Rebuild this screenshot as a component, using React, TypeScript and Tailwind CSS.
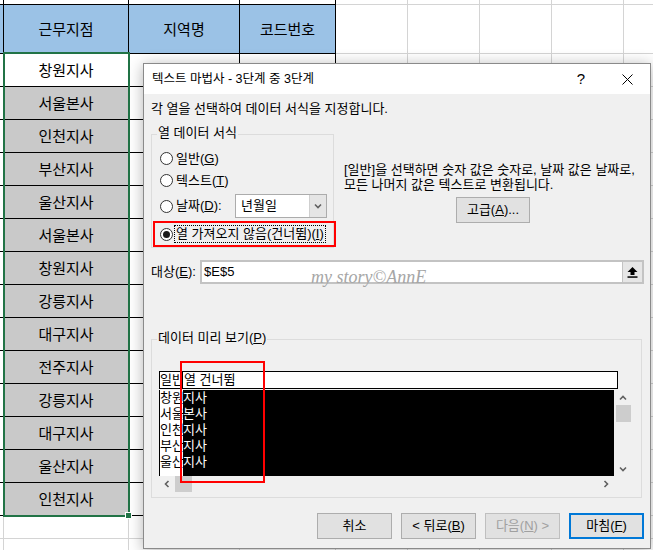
import React from 'react';

const FONT = "font-['Noto_Sans_CJK_KR','Noto_Sans',sans-serif]";
const DIALOG_FONT = "font-['Liberation_Sans','Noto_Sans_CJK_KR',sans-serif]";

const widths = ['w-[4px]', 'w-[125px]', 'w-[111px]', 'w-[96px]', 'w-[72px]', 'w-[72px]', 'w-[72px]', 'w-[72px]', 'w-[72px]'];

const branches = [
  '창원지사', '서울본사', '인천지사', '부산지사', '울산지사', '서울본사', '창원지사',
  '강릉지사', '대구지사', '전주지사', '강릉지사', '대구지사', '울산지사', '인천지사',
];

const headers = ['', '근무지점', '지역명', '코드번호'];

function Chevron({ dir }: { dir: 'up' | 'down' | 'left' | 'right' }) {
  const d = {
    up: 'M1 5.5 L4 2.5 L7 5.5',
    down: 'M1 2.5 L4 5.5 L7 2.5',
    left: 'M5.5 1 L2.5 4 L5.5 7',
    right: 'M2.5 1 L5.5 4 L2.5 7',
  }[dir];
  return (
    <svg width="8" height="8" viewBox="0 0 8 8">
      <path d={d} fill="none" stroke="#606060" strokeWidth="1.6" />
    </svg>
  );
}

function Radio({ checked = false }: { checked?: boolean }) {
  return (
    <span className="w-[13px] h-[13px] rounded-full border border-[#333] bg-white flex items-center justify-center shrink-0">
      {checked && <span className="w-[7px] h-[7px] rounded-full bg-[#1a1a1a]" />}
    </span>
  );
}

function Sheet() {
  return (
    <div className={`flex flex-col ${FONT} text-[15px] text-black`}>
      {/* partial row above the table */}
      <div className="flex h-[5px]">
        {widths.map((w, i) => (
          <div
            key={i}
            className={`${w} shrink-0 box-border border-r border-b ${i < 4 ? 'border-black' : 'border-[#d4d4d4]'}`}
          />
        ))}
      </div>
      {/* header */}
      <div className="flex h-[49px]">
        {widths.map((w, i) => (
          <div
            key={i}
            className={`${w} shrink-0 box-border border-r border-b flex items-center justify-center ${
              i < 4 ? 'border-black bg-[#9bc2e6]' : 'border-[#d4d4d4] bg-white'
            }`}
          >
            {headers[i]}
          </div>
        ))}
      </div>
      {branches.map((b, r) => (
        <div key={r} className="flex h-[33px]">
          {widths.map((w, i) => (
            <div
              key={i}
              className={`${w} shrink-0 box-border border-r border-b flex items-center justify-center ${
                i < 4 ? 'border-black' : 'border-[#d4d4d4]'
              } ${i === 1 && r > 0 ? 'bg-[#c9c9c9]' : 'bg-white'}`}
            >
              {i === 1 ? b : ''}
            </div>
          ))}
        </div>
      ))}
      {[0, 1].map((r) => (
        <div key={r} className="flex h-[23px]">
          {widths.map((w, i) => (
            <div key={i} className={`${w} shrink-0 box-border border-r border-b border-[#d4d4d4]`} />
          ))}
        </div>
      ))}
    </div>
  );
}

function Button({ children, primary = false, disabled = false }: { children: React.ReactNode; primary?: boolean; disabled?: boolean }) {
  return (
    <div
      className={`w-[75px] h-[26px] box-border flex items-center justify-center bg-[#e1e1e1] ${
        primary ? 'border-2 border-[#0078d7]' : disabled ? 'border border-[#bfbfbf]' : 'border border-[#adadad]'
      } ${disabled ? 'text-[#a0a0a0]' : 'text-black'}`}
    >
      {children}
    </div>
  );
}

function Dialog() {
  return (
    <div
      className={`absolute left-[143px] top-[63px] w-[508px] h-[486px] box-border border border-[#8a8a8a] bg-[#f0f0f0] shadow-[0_2px_14px_rgba(0,0,0,0.3)] flex flex-col ${DIALOG_FONT} text-[13px] leading-[16px] text-black`}
    >
      {/* title bar */}
      <div className="h-[30px] bg-white flex items-center shrink-0">
        <div className="pl-[8px] flex-1 text-[12.5px] leading-[16px] whitespace-nowrap">텍스트 마법사 - 3단계 중 3단계</div>
        <div className="w-[46px] h-full flex items-center justify-center text-[15px]">?</div>
        <div className="w-[46px] h-full flex items-center justify-center">
          <svg width="11" height="11" viewBox="0 0 11 11">
            <path d="M0.5 0.5 L10.5 10.5 M10.5 0.5 L0.5 10.5" stroke="#000" strokeWidth="1" />
          </svg>
        </div>
      </div>

      {/* body */}
      <div className="flex-1 pl-[7px] pr-[6px] flex flex-col relative">
        <div className="mt-[7px] h-[16px] whitespace-nowrap">각 열을 선택하여 데이터 서식을 지정합니다.</div>

        <div className="mt-[17px] flex">
          {/* 열 데이터 서식 group */}
          <div className="relative w-[183px] h-[114px] box-border border border-[#dcdcdc] shrink-0 flex flex-col">
            <div className="absolute left-[5px] -top-[10px] bg-[#f0f0f0] px-[1px] whitespace-nowrap">열 데이터 서식</div>
            <div className="mt-[15px] h-[18px] pl-[8px] flex items-center gap-[3px]">
              <Radio />
              <span>일반(<u>G</u>)</span>
            </div>
            <div className="mt-[5px] h-[18px] pl-[8px] flex items-center gap-[3px]">
              <Radio />
              <span>텍스트(<u>T</u>)</span>
            </div>
            <div className="mt-[5px] h-[24px] pl-[8px] flex items-center gap-[3px]">
              <Radio />
              <span className="w-[56px] shrink-0 whitespace-nowrap">날짜(<u>D</u>):</span>
              <div className="w-[92px] h-[24px] box-border border border-[#acacac] bg-white flex shrink-0">
                <div className="flex-1 pl-[5px] flex items-center">년월일</div>
                <div className="w-[17px] bg-[#e5e5e5] border-l border-[#cfcfcf] flex items-center justify-center">
                  <Chevron dir="down" />
                </div>
              </div>
            </div>
            <div className="mt-[3px] ml-[1px] w-[183px] h-[26px] box-border border-2 border-[#ff0000] shrink-0 pl-[5px] flex items-center gap-[1px] relative z-10">
              <Radio checked />
              <span className="border border-dotted border-black px-[1px] whitespace-nowrap">
                열 가져오지 않음(건너뜀)(<u>I</u>)
              </span>
            </div>
          </div>

          {/* description */}
          <div className="ml-[10px] pt-[28px] flex flex-col">
            <div className="leading-[15px] whitespace-nowrap">
              [일반]을 선택하면 숫자 값은 숫자로, 날짜 값은 날짜로,
              <br />
              모든 나머지 값은 텍스트로 변환됩니다.
            </div>
            <div className="mt-[5px] ml-[112px] w-[74px] h-[26px] box-border border border-[#adadad] bg-[#e1e1e1] flex items-center justify-center">
              고급(<u>A</u>)...
            </div>
          </div>
        </div>

        {/* 대상 */}
        <div className="mt-[12px] h-[24px] flex items-center">
          <div className="w-[49px] shrink-0 whitespace-nowrap">대상(<u>E</u>):</div>
          <div className="flex-1 h-full box-border border-2 border-[#c3c3c3] bg-white flex">
            <div className="flex-1 pl-[2px] flex items-center">$E$5</div>
            <div className="w-[20px] bg-[#e6e6e6] border-l border-[#c3c3c3] flex items-center justify-center">
              <svg width="11" height="12" viewBox="0 0 11 12">
                <path d="M5.5 1 L10.5 6 L7.5 6 L7.5 9 L3.5 9 L3.5 6 L0.5 6 Z" fill="#000" />
                <rect x="0.5" y="10.3" width="10" height="1.5" fill="#000" />
              </svg>
            </div>
          </div>
        </div>

        {/* 데이터 미리 보기 group */}
        <div className="mt-[55px] w-[491px] h-[159px] box-border border border-[#dcdcdc] relative shrink-0 pl-[7px] pt-[31px]">
          <div className="absolute left-[5px] -top-[10px] bg-[#f0f0f0] px-[1px] whitespace-nowrap">
            데이터 미리 보기(<u>P</u>)
          </div>
          <div className="flex flex-col w-[473px]">
            <div className="w-[459px] h-[18px] box-border border border-black bg-white flex leading-[15px]">
              <div className="w-[23px] border-r border-black overflow-hidden whitespace-nowrap">일반</div>
              <div className="pl-[1px] whitespace-nowrap">열 건너뜀</div>
            </div>
            <div className="flex h-[86px] mt-[1px]">
              <div className="w-[455px] border-l border-black flex">
                <div className="w-[23px] bg-white flex flex-col overflow-hidden">
                  {['창원', '서울', '인천', '부산', '울산'].map((t) => (
                    <div key={t} className="h-[16px] leading-[16px] whitespace-nowrap">{t}</div>
                  ))}
                </div>
                <div className="flex-1 bg-black text-white flex flex-col">
                  {['지사', '본사', '지사', '지사', '지사'].map((t, i) => (
                    <div key={i} className="h-[16px] leading-[16px]">{t}</div>
                  ))}
                </div>
              </div>
              <div className="w-[18px] flex flex-col items-center">
                <div className="h-[15px] flex items-center justify-center"><Chevron dir="up" /></div>
                <div className="w-[15px] h-[17px] bg-[#cdcdcd] ml-[1px]" />
                <div className="flex-1" />
                <div className="h-[15px] flex items-center justify-center"><Chevron dir="down" /></div>
              </div>
            </div>
            <div className="w-[455px] h-[16px] flex items-center">
              <div className="w-[16px] flex items-center justify-center"><Chevron dir="left" /></div>
              <div className="w-[17px] h-[16px] bg-[#cdcdcd]" />
              <div className="flex-1" />
              <div className="w-[16px] flex items-center justify-center"><Chevron dir="right" /></div>
            </div>
          </div>
          <div className="absolute left-[28px] top-[21px] w-[85px] h-[122px] border-2 border-[#ff0000]" />
        </div>

        {/* buttons */}
        <div className="mt-[15px] flex justify-end gap-[9px]">
          <Button>취소</Button>
          <Button>&lt; 뒤로(<u>B</u>)</Button>
          <Button disabled>다음(<u>N</u>) &gt;</Button>
          <Button primary>마침(<u>F</u>)</Button>
        </div>

        {/* blog watermark */}
        <div className="absolute left-[167px] top-[173px] font-['Liberation_Serif',serif] italic text-[18px] text-[#a6a6a6] leading-[20px] whitespace-nowrap">
          my story©AnnE
        </div>
      </div>
    </div>
  );
}

export default function App() {
  return (
    <div className="relative w-[653px] h-[550px] overflow-hidden bg-white">
      <Sheet />
      {/* cell selection */}
      <div className="absolute left-[3px] top-[52px] w-[127px] h-[465px] border-2 border-[#217346]" />
      <div className="absolute left-[125px] top-[512px] w-[7px] h-[7px] bg-[#217346] border border-white" />
      <Dialog />
    </div>
  );
}
